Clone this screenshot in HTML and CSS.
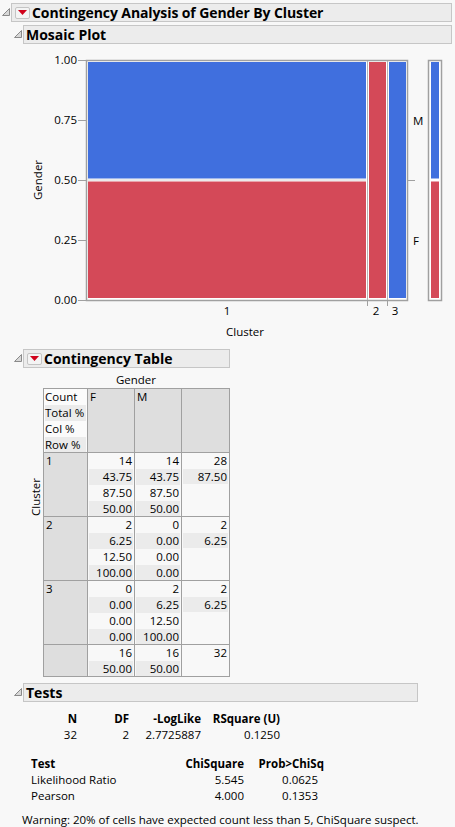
FILE: index.html
```html
<!DOCTYPE html>
<html>
<head>
<meta charset="utf-8">
<link rel="stylesheet" href="styles.css">
</head>
<body>
<div class="outline level0">
  <div class="head-row">
    <svg class="disclose" width="8" height="8" viewBox="0 0 8 8"><path d="M7.5 0.5 L7.5 7.5 L0.5 7.5 Z" fill="#d8d8d8" stroke="#8a8a8a" stroke-width="1"/></svg>
    <div class="head-box wide">
      <span class="redbtn"><svg width="9" height="5" viewBox="0 0 9 5"><path d="M0 0 H9 L4.5 5 Z" fill="#d0021b"/></svg></span>
      <span class="title main">Contingency Analysis of Gender By Cluster</span>
    </div>
  </div>

  <div class="outline level1">
    <div class="head-row">
      <svg class="disclose" width="8" height="8" viewBox="0 0 8 8"><path d="M7.5 0.5 L7.5 7.5 L0.5 7.5 Z" fill="#d8d8d8" stroke="#8a8a8a" stroke-width="1"/></svg>
      <div class="head-box wide">
        <span class="title">Mosaic Plot</span>
      </div>
    </div>
    <svg class="mosaic" width="455" height="296" viewBox="0 44 455 296">
      <g class="axis-text">
        <text x="77" y="64" text-anchor="end">1.00</text>
        <text x="77" y="124" text-anchor="end">0.75</text>
        <text x="77" y="184" text-anchor="end">0.50</text>
        <text x="77" y="244" text-anchor="end">0.25</text>
        <text x="77" y="304" text-anchor="end">0.00</text>
        <text x="0" y="0" text-anchor="middle" transform="translate(42 180) rotate(-90)">Gender</text>
        <text x="227" y="315" text-anchor="middle">1</text>
        <text x="376" y="315" text-anchor="middle">2</text>
        <text x="395" y="315" text-anchor="middle">3</text>
        <text x="245" y="336" text-anchor="middle">Cluster</text>
        <text x="413" y="125">M</text>
        <text x="413" y="245">F</text>
      </g>
      <g stroke="#a0a0a0" stroke-width="1">
        <line x1="78" y1="60.5" x2="86" y2="60.5"/>
        <line x1="78" y1="120.5" x2="86" y2="120.5"/>
        <line x1="78" y1="180.5" x2="86" y2="180.5"/>
        <line x1="78" y1="240.5" x2="86" y2="240.5"/>
        <line x1="78" y1="300.5" x2="86" y2="300.5"/>
        <line x1="367.5" y1="301" x2="367.5" y2="306"/>
        <line x1="387.5" y1="301" x2="387.5" y2="306"/>
        <line x1="408" y1="180.5" x2="415" y2="180.5"/>
      </g>
      <rect x="86.5" y="60.5" width="321" height="240" fill="#ffffff" stroke="#a0a0a0" stroke-width="1.5"/>
      <rect x="88" y="62" width="278" height="116.5" fill="#406fde"/>
      <rect x="88" y="181.5" width="278" height="116.5" fill="#d44958"/>
      <line x1="88" y1="180" x2="366" y2="180" stroke="#d6d6d6" stroke-width="1"/>
      <line x1="367.5" y1="61" x2="367.5" y2="300" stroke="#b4b4b4" stroke-width="1"/>
      <line x1="387.5" y1="61" x2="387.5" y2="300" stroke="#b4b4b4" stroke-width="1"/>
      <rect x="369" y="62" width="17" height="236" fill="#d44958"/>
      <rect x="389" y="62" width="17" height="236" fill="#406fde"/>
      <rect x="428.5" y="60.5" width="13" height="240" fill="#ffffff" stroke="#a0a0a0" stroke-width="1.5"/>
      <rect x="431" y="62" width="8" height="116.5" fill="#406fde"/>
      <rect x="431" y="181.5" width="8" height="116.5" fill="#d44958"/>
    </svg>
  </div>

  <div class="outline level1">
    <div class="head-row">
      <svg class="disclose" width="8" height="8" viewBox="0 0 8 8"><path d="M7.5 0.5 L7.5 7.5 L0.5 7.5 Z" fill="#d8d8d8" stroke="#8a8a8a" stroke-width="1"/></svg>
      <div class="head-box ct">
        <span class="redbtn"><svg width="9" height="5" viewBox="0 0 9 5"><path d="M0 0 H9 L4.5 5 Z" fill="#d0021b"/></svg></span>
        <span class="title">Contingency Table</span>
      </div>
    </div>
    <div class="ct-wrap">
      <div class="gender-label">Gender</div>
      <div class="ct-body">
        <div class="cluster-label"><span>Cluster</span></div>
        <table class="ctable">
          <tr class="hdr">
            <td class="lab"><div class="ln">Count</div><div class="ln alt">Total %</div><div class="ln">Col %</div><div class="ln alt">Row %</div></td>
            <td class="gray">F</td>
            <td class="gray">M</td>
            <td class="gray"></td>
          </tr>
          <tr>
            <td class="gray">1</td>
            <td><div class="ln">14</div><div class="ln alt">43.75</div><div class="ln">87.50</div><div class="ln alt">50.00</div></td>
            <td><div class="ln">14</div><div class="ln alt">43.75</div><div class="ln">87.50</div><div class="ln alt">50.00</div></td>
            <td><div class="ln">28</div><div class="ln alt">87.50</div></td>
          </tr>
          <tr>
            <td class="gray">2</td>
            <td><div class="ln">2</div><div class="ln alt">6.25</div><div class="ln">12.50</div><div class="ln alt">100.00</div></td>
            <td><div class="ln">0</div><div class="ln alt">0.00</div><div class="ln">0.00</div><div class="ln alt">0.00</div></td>
            <td><div class="ln">2</div><div class="ln alt">6.25</div></td>
          </tr>
          <tr>
            <td class="gray">3</td>
            <td><div class="ln">0</div><div class="ln alt">0.00</div><div class="ln">0.00</div><div class="ln alt">0.00</div></td>
            <td><div class="ln">2</div><div class="ln alt">6.25</div><div class="ln">12.50</div><div class="ln alt">100.00</div></td>
            <td><div class="ln">2</div><div class="ln alt">6.25</div></td>
          </tr>
          <tr class="tot">
            <td class="gray"></td>
            <td><div class="ln">16</div><div class="ln alt">50.00</div></td>
            <td><div class="ln">16</div><div class="ln alt">50.00</div></td>
            <td><div class="ln">32</div></td>
          </tr>
        </table>
      </div>
    </div>
  </div>

  <div class="outline level1">
    <div class="head-row">
      <svg class="disclose" width="8" height="8" viewBox="0 0 8 8"><path d="M7.5 0.5 L7.5 7.5 L0.5 7.5 Z" fill="#d8d8d8" stroke="#8a8a8a" stroke-width="1"/></svg>
      <div class="head-box tests">
        <span class="title">Tests</span>
      </div>
    </div>
    <div class="t1">
      <div class="b">N</div><div class="b">DF</div><div class="b">-LogLike</div><div class="b">RSquare (U)</div>
      <div>32</div><div>2</div><div>2.7725887</div><div>0.1250</div>
    </div>
    <div class="t2">
      <div class="b l">Test</div><div class="b">ChiSquare</div><div class="b">Prob&gt;ChiSq</div>
      <div class="l">Likelihood Ratio</div><div>5.545</div><div class="p">0.0625</div>
      <div class="l">Pearson</div><div>4.000</div><div class="p">0.1353</div>
    </div>
    <div class="warn">Warning: 20% of cells have expected count less than 5, ChiSquare suspect.</div>
  </div>
</div>
</body>
</html>
```

FILE: styles.css
```css
html, body {
  margin: 0;
  padding: 0;
  background: #f8f8f8;
}
body {
  width: 455px;
  height: 827px;
  overflow: hidden;
  font-family: "Open Sans", "Noto Sans", sans-serif;
  font-size: 11.5px;
  color: #000;
}
.outline.level0 {
  padding: 3px 3px 0 2px;
}
.outline.level1 {
  margin-left: 12px;
}
.head-row {
  display: flex;
  align-items: flex-start;
}
.disclose {
  flex: none;
  margin-top: 5px;
  margin-right: 1px;
}
.head-box {
  height: 17px;
  border: 1px solid #c6c6c6;
  background: #ececec;
  display: flex;
  align-items: center;
  padding-left: 2px;
  box-sizing: content-box;
}
.head-box.wide { flex: 1; }
.head-box.ct { width: 203px; }
.head-box.tests { width: 391px; }
.title {
  font-family: "Open Sans", sans-serif;
  font-weight: 700;
  font-size: 14px;
  line-height: 17px;
  white-space: nowrap;
}
.title.main {
  letter-spacing: -0.1px;
}
.redbtn {
  width: 13px;
  height: 10px;
  border: 1px solid #c4c4c4;
  border-radius: 2px;
  background: #f4f4f4;
  display: inline-flex;
  align-items: center;
  justify-content: center;
  margin: 0 2px 0 1px;
}
.level1 > .head-row { margin-top: 3px; }
.mosaic {
  display: block;
  margin-left: -14px;
}
.axis-text text {
  font-family: "Open Sans", sans-serif;
  font-size: 11.5px;
  fill: #000;
}
.level1:nth-child(3) > .head-row { margin-top: 9px; }
.ct-wrap {
  margin-left: 15px;
  padding-top: 4px;
}
.gender-label {
  width: 186px;
  margin-left: 14px;
  text-align: center;
  line-height: 16px;
}
.ct-body {
  display: flex;
}
.cluster-label {
  width: 14px;
  position: relative;
}
.cluster-label span {
  position: absolute;
  left: 0;
  top: 128px;
  transform: rotate(-90deg);
  transform-origin: 0 0;
  line-height: 14px;
  white-space: nowrap;
}
.ctable {
  border-collapse: collapse;
  border: 1px solid #a0a0a0;
}
.ctable td {
  border: 1px solid #a0a0a0;
  padding: 0 1px;
  vertical-align: top;
  text-align: right;
  line-height: 16px;
  box-sizing: border-box;
}
.ctable td:nth-child(1) { width: 44px; text-align: left; }
.ctable td:nth-child(2), .ctable td:nth-child(3) { width: 47px; }
.ctable td:nth-child(4) { width: 48px; }
.ctable td.gray {
  background: #dedede;
  text-align: left;
  padding-left: 2px;
}
.ctable td.lab { background: #fbfbfb; }
.ln {
  height: 16px;
  padding-right: 1px;
  white-space: nowrap;
}
.ln:last-child { height: 15px; }
.ln.alt { background: #ebebeb; }
.level1:nth-child(4) > .head-row { margin-top: 6px; }
.t1 {
  display: grid;
  grid-template-columns: 37px 52px 72px 79px;
  margin-left: 26px;
  margin-top: 9px;
  line-height: 16px;
  text-align: right;
}
.t2 {
  display: grid;
  grid-template-columns: 152px 61px 80px;
  margin-left: 17px;
  margin-top: 13px;
  line-height: 16px;
  text-align: right;
}
.b { font-weight: 700; }
.l { text-align: left; }
.p { padding-right: 6px; }
.warn {
  margin-left: 8px;
  margin-top: 8px;
  line-height: 16px;
  white-space: nowrap;
}
```
